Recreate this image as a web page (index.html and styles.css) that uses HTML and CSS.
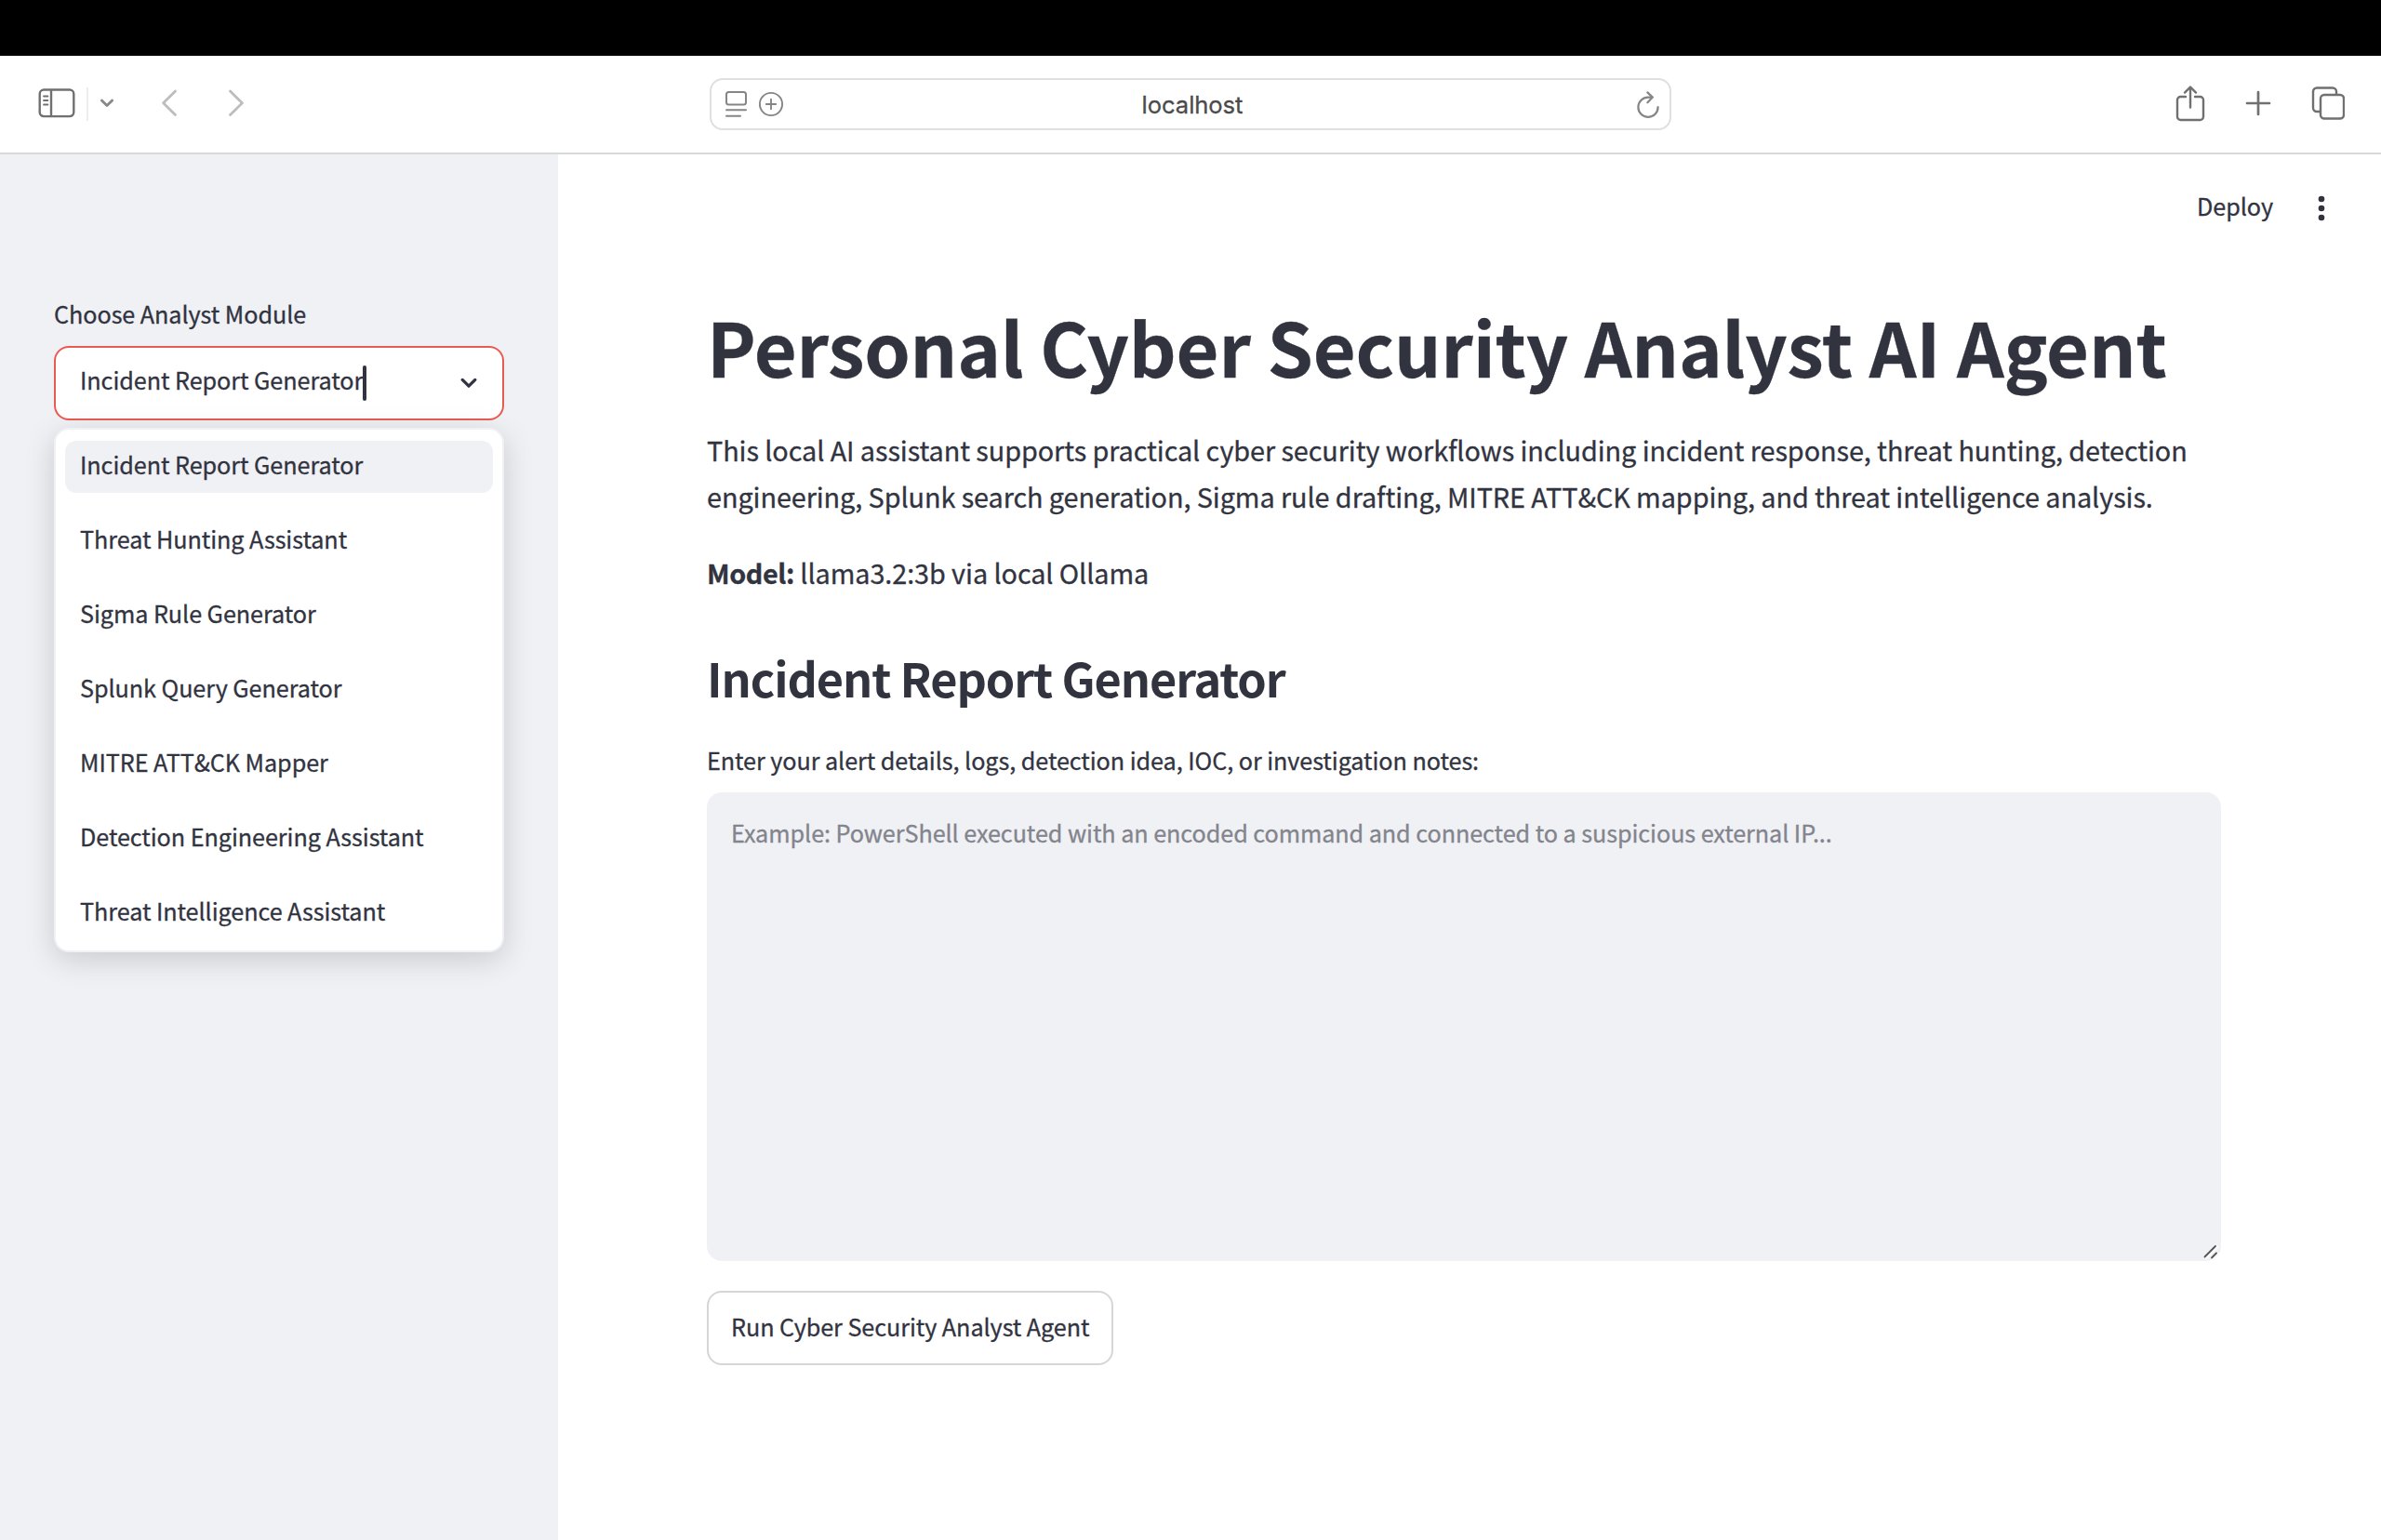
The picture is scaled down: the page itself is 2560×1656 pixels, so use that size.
FILE: index.html
```html
<!DOCTYPE html>
<html lang="en">

<head>
    <meta charset="utf-8">
    <title>Personal Cyber Security Analyst AI Agent</title>
    <link rel="stylesheet" href="styles.css">
</head>

<body>
    <div class="notch"></div>

    <!-- browser toolbar -->
    <div class="toolbar">
        <div class="tools-left">
            <svg class="icon-sidebar" width="40" height="32" viewBox="0 0 40 32" fill="none" stroke="#707070" stroke-width="2.4">
                <rect x="1.7" y="1.5" width="36.6" height="28.6" rx="4.5" />
                <path d="M14 1.5V30" />
                <path d="M6 8.5h4.4M6 13h4.4M6 17.5h4.4" stroke-width="1.8" stroke-linecap="round" />
            </svg>
            <span class="divider"></span>
            <svg class="icon-down" width="16" height="12" viewBox="0 0 16 12" fill="none" stroke="#88888b" stroke-width="2.8" stroke-linecap="round" stroke-linejoin="round">
                <path d="M2.4 3l5.6 5.6L13.6 3" />
            </svg>
            <svg class="icon-back" width="18" height="32" viewBox="0 0 18 32" fill="none" stroke="#bdbdbd" stroke-width="2.8" stroke-linecap="round" stroke-linejoin="round">
                <path d="M15.5 3L2.6 15.8l12.9 12.8" />
            </svg>
            <svg width="18" height="32" viewBox="0 0 18 32" fill="none" stroke="#bdbdbd" stroke-width="2.8" stroke-linecap="round" stroke-linejoin="round">
                <path d="M2.5 3l12.9 12.8L2.5 28.6" />
            </svg>
        </div>

        <div class="address">
            <svg width="24" height="30" viewBox="0 0 24 30" fill="none" stroke="#858585" stroke-width="2" stroke-linecap="round">
                <rect x="2" y="2" width="21" height="13.4" rx="2.5" />
                <path d="M2 21.200h21M2 27.800h15" />
            </svg>
            <svg class="icon-circle" width="28" height="28" viewBox="0 0 28 28" fill="none" stroke="#858585" stroke-width="1.9" stroke-linecap="round">
                <circle cx="14" cy="14" r="12.1" />
                <path d="M14 8.8v10.4M8.8 14h10.4" />
            </svg>
            <span class="host">localhost</span>
            <svg class="icon-reload" width="26" height="30" viewBox="0 0 26 30" fill="none" stroke="#858585" stroke-width="2.2" stroke-linecap="round" stroke-linejoin="round">
                <path d="M17.4 6.6H13A10.6 10.6 0 1 0 23.6 17.2" />
                <path d="M12.4 1.4l5.4 5.2-5.4 5.6" />
            </svg>
        </div>

        <div class="tools-right">
            <svg width="32" height="40" viewBox="0 0 32 40" fill="none" stroke="#707070" stroke-width="2.4" stroke-linecap="round" stroke-linejoin="round">
                <path d="M11 13H5.500a3.500 3.500 0 0 0-3.500 3.500V34.500a3.500 3.500 0 0 0 3.500 3.500h21a3.500 3.500 0 0 0 3.500-3.500V16.500a3.500 3.500 0 0 0-3.500-3.500h-5.500" />
                <path d="M16 24.500V3M10 8.600L16 2.500l6 6.100" />
            </svg>
            <svg class="icon-plus" width="28" height="28" viewBox="0 0 28 28" fill="none" stroke="#707070" stroke-width="2.7" stroke-linecap="round">
                <path d="M14 2v24M2 14h24" />
            </svg>
            <svg width="36" height="36" viewBox="0 0 36 36" fill="none" stroke="#707070" stroke-width="2.4">
                <path d="M9.500 27H6a4 4 0 0 1-4-4V5.500a4 4 0 0 1 4-4h17a4 4 0 0 1 4 4V9" />
                <rect x="10" y="9" width="25" height="25.500" rx="4" />
            </svg>
        </div>
    </div>

    <div class="app">
        <aside class="sidebar">
            <label class="label">Choose Analyst Module</label>
            <div class="select">
                <span class="value">Incident Report Generator</span><span class="caret"></span>
                <svg width="20" height="16" viewBox="0 0 20 16" fill="none" stroke="#31333f" stroke-width="3.200" stroke-linecap="round" stroke-linejoin="round">
                    <path d="M3.200 4.400l6.800 6.800 6.800-6.800" />
                </svg>
            </div>
            <ul class="menu">
                <li class="active">Incident Report Generator</li>
                <li>Threat Hunting Assistant</li>
                <li>Sigma Rule Generator</li>
                <li>Splunk Query Generator</li>
                <li>MITRE ATT&amp;CK Mapper</li>
                <li>Detection Engineering Assistant</li>
                <li>Threat Intelligence Assistant</li>
            </ul>
        </aside>

        <main class="main">
            <header class="header">
                <span class="deploy">Deploy</span>
                <svg width="8" height="28" viewBox="0 0 8 28" fill="#31333f">
                    <circle cx="4" cy="4" r="3.300" />
                    <circle cx="4" cy="14" r="3.300" />
                    <circle cx="4" cy="24" r="3.300" />
                </svg>
            </header>
            <div class="content">
                <h1>Personal Cyber Security Analyst AI Agent</h1>
                <p class="intro">This local AI assistant supports practical cyber security workflows including incident response, threat hunting, detection<br>engineering, Splunk search generation, Sigma rule drafting, MITRE ATT&amp;CK mapping, and threat intelligence analysis.</p>
                <p class="model"><b>Model:</b> llama3.2:3b via local Ollama</p>
                <h2>Incident Report Generator</h2>
                <label class="label">Enter your alert details, logs, detection idea, IOC, or investigation notes:</label>
                <div class="textarea">
                    <span>Example: PowerShell executed with an encoded command and connected to a suspicious external IP...</span>
                    <svg class="grip" width="18" height="18" viewBox="0 0 18 18" fill="none" stroke-linecap="round">
                        <path d="M4 16L16 4M11.500 17l5.500-5.500" stroke="#fafafa" stroke-width="3" />
                        <path d="M2.500 14.500L14 3M10 15.500l5-5" stroke="#555" stroke-width="1.800" />
                    </svg>
                </div>
                <button class="run">Run Cyber Security Analyst Agent</button>
            </div>
        </main>
    </div>
</body>

</html>
```
FILE: styles.css
```css
* {
    box-sizing: border-box;
}

body {
    margin: 0;
    width: 2560px;
    height: 1656px;
    overflow: hidden;
    display: flex;
    flex-direction: column;
    background: #fff;
    color: #31333f;
    font-family: "Noto Sans CJK SC", "Noto Sans", sans-serif;
    font-size: 25.2px;
    line-height: 40px;
    letter-spacing: -0.065px;
    -webkit-text-stroke: 0.3px;
}

h1,
h2,
p,
ul {
    margin: 0;
    padding: 0;
}

svg {
    display: block;
    flex: none;
}

.notch {
    height: 60px;
    background: #000;
}

/* toolbar */
.toolbar {
    height: 106px;
    border-bottom: 2px solid #d9d9d9;
    display: grid;
    grid-template-columns: 763px 1034px 763px;
    align-items: center;
}

.tools-left,
.tools-right {
    display: flex;
    align-items: center;
}

.tools-left {
    padding-left: 41px;
    margin-top: -2px;
}

.divider {
    width: 2px;
    height: 36px;
    margin: 2px 12px 0;
    background: #ececec;
}

.icon-down {
    margin-right: 50px;
}

.icon-back {
    margin-right: 54px;
}

.tools-right {
    justify-content: flex-end;
    padding-right: 39px;
    margin-top: -3px;
}

.icon-plus {
    margin: 0 43px;
}

.address {
    height: 56px;
    border: 2px solid #e0e0e0;
    border-radius: 14px;
    padding: 0 10px 0 14px;
    display: flex;
    align-items: center;
}

.icon-circle {
    margin-left: 12px;
}

.icon-reload {
    margin-top: 2px;
}

.host {
    flex: 1;
    padding: 2px 38px 0 0;
    text-align: center;
    color: #4b4b4b;
    font-family: Inter, sans-serif;
    font-size: 25.6px;
}

/* app */
.app {
    flex: 1;
    display: flex;
}

.sidebar {
    width: 600px;
    padding: 151px 58px 0;
    background: #f0f1f5;
}

.label {
    display: block;
}

.select {
    height: 80px;
    margin-top: 15px;
    padding: 0 26px 0 26px;
    border: 2px solid #eb5a52;
    border-radius: 16px;
    background: #fff;
    display: flex;
    align-items: center;
}

.value {
    margin-top: -8px;
}

.caret {
    width: 4px;
    height: 38px;
    border-radius: 2px;
    background: #31333f;
}

.select svg {
    margin-left: auto;
}

.menu {
    height: 564px;
    margin-top: 8px;
    padding: 12px 10px;
    border: 2px solid #f0f1f5;
    border-radius: 16px;
    background: #fff;
    box-shadow: 0 8px 32px rgba(0, 0, 0, 0.16);
    list-style: none;
    display: flex;
    flex-direction: column;
    gap: 24px;
}

.menu li {
    height: 56px;
    padding: 5px 16px;
    border-radius: 12px;
}

.menu .active {
    background: #f0f1f5;
}

.main {
    flex: 1;
}

.header {
    height: 116px;
    padding-right: 60px;
    display: flex;
    align-items: center;
    justify-content: flex-end;
}

.deploy {
    margin: -6px 48px 0 0;
}

.content {
    width: 1628px;
    margin: 37px 0 0 160px;
}

h1 {
    font-size: 79.2px;
    line-height: 106px;
    letter-spacing: -0.19px;
    white-space: nowrap;
}

p {
    font-size: 28.8px;
    line-height: 50px;
    letter-spacing: -0.07px;
    white-space: nowrap;
}

.intro {
    margin-top: 34px;
}

.model {
    margin-top: 32px;
}

.model b {
    letter-spacing: -0.4px;
}

h2 {
    margin: 54px 0 34px;
    font-size: 50.4px;
    line-height: 68px;
    letter-spacing: -1.1px;
    -webkit-text-stroke: 0;
}

.textarea {
    position: relative;
    height: 504px;
    margin-top: 15px;
    padding: 23px 26px;
    border-radius: 16px;
    background: #f0f1f5;
    color: #83848c;
}

.grip {
    position: absolute;
    right: 2px;
    bottom: 1px;
}

.run {
    height: 80px;
    margin-top: 32px;
    padding: 0 24px 4px;
    border: 2px solid #d6d6d8;
    border-radius: 16px;
    background: #fff;
    color: inherit;
    font: inherit;
    letter-spacing: inherit;
}
```
